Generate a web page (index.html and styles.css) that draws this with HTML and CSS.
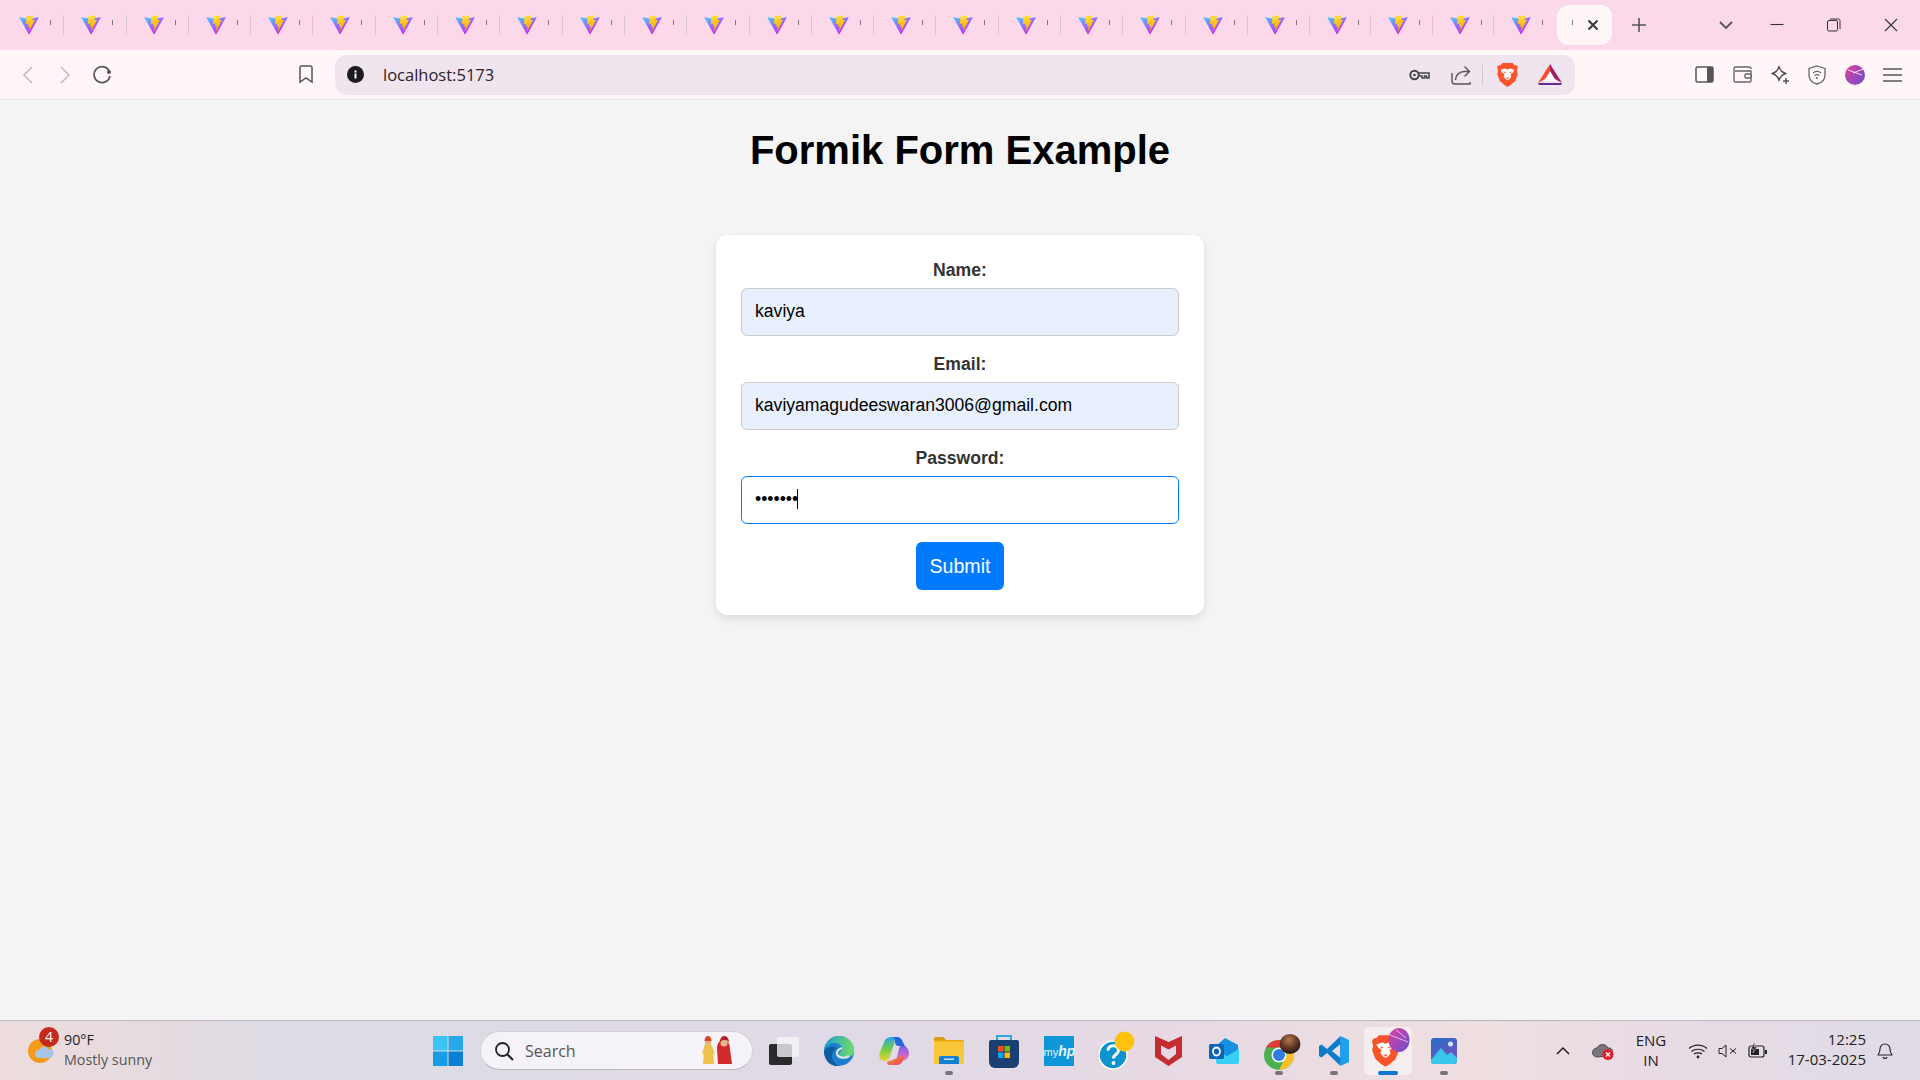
FILE: index.html
```html
<!DOCTYPE html>
<html lang="en">
<head>
    <meta charset="UTF-8">
    <title>Formik Form Example</title>
    <link rel="stylesheet" href="styles.css">
</head>
<body>
    <!-- shared icons -->
    <svg class="defs" width="0" height="0">
        <defs>
            <linearGradient id="viteA" x1="6" y1="33" x2="235" y2="344" gradientUnits="userSpaceOnUse">
                <stop offset="0" stop-color="#41d1ff"/>
                <stop offset="1" stop-color="#bd34fe"/>
            </linearGradient>
            <linearGradient id="viteB" x1="194" y1="8" x2="236" y2="292" gradientUnits="userSpaceOnUse">
                <stop offset="0" stop-color="#ffea83"/>
                <stop offset="0.08" stop-color="#ffdd35"/>
                <stop offset="1" stop-color="#ffa800"/>
            </linearGradient>
            <linearGradient id="ball" x1="0" y1="0" x2="1" y2="1">
                <stop offset="0" stop-color="#e0409a"/>
                <stop offset="1" stop-color="#6a4fd0"/>
            </linearGradient>
            <linearGradient id="edgeTop" x1="0" y1="0.5" x2="1" y2="0.5">
                <stop offset="0" stop-color="#1a9fcf"/>
                <stop offset="1" stop-color="#72dc68"/>
            </linearGradient>
            <linearGradient id="copilotLeft" x1="0.5" y1="0" x2="0.5" y2="1">
                <stop offset="0" stop-color="#2aa6e0"/>
                <stop offset="0.55" stop-color="#7ccf3e"/>
                <stop offset="1" stop-color="#f0d23c"/>
            </linearGradient>
            <linearGradient id="copilotRight" x1="0.5" y1="0" x2="0.5" y2="1">
                <stop offset="0" stop-color="#7f5ce8"/>
                <stop offset="1" stop-color="#ee6fc0"/>
            </linearGradient>
            <linearGradient id="copilotLow" x1="0" y1="0" x2="1" y2="1">
                <stop offset="0" stop-color="#f59a3c"/>
                <stop offset="1" stop-color="#e8405f"/>
            </linearGradient>
            <radialGradient id="nutBall" cx="0.45" cy="0.3" r="0.7">
                <stop offset="0" stop-color="#b87a4e"/>
                <stop offset="0.6" stop-color="#5a3422"/>
                <stop offset="1" stop-color="#2c1a12"/>
            </radialGradient>
            <symbol id="vite" viewBox="0 0 410 404">
                <path fill="url(#viteA)" d="M399.6 59.5L215.6 388.5C211.8 395.3 202.1 395.4 198.2 388.6L10.6 59.6C6.4 52.2 12.7 43.3 21 44.8L205.2 77.7C206.4 77.9 207.6 77.9 208.8 77.7L389.1 44.8C397.4 43.3 403.8 52.1 399.6 59.5Z"/>
                <path fill="url(#viteB)" d="M293 1.6L156.8 28.3C154.6 28.7 152.9 30.6 152.8 32.9L144.4 174.3C144.2 177.7 147.3 180.2 150.5 179.5L188.4 170.7C192 169.9 195.2 173.1 194.4 176.6L183.2 231.8C182.4 235.5 185.9 238.7 189.5 237.6L212.9 230.4C216.6 229.3 220.1 232.5 219.3 236.2L201.4 322.9C200.3 328.3 207.5 331.2 210.5 326.6L212.5 323.5L323.5 102.1C325.3 98.4 322.1 94.1 318 94.9L279 102.5C275.3 103.2 272.2 99.7 273.3 96.2L298.7 7.9C299.8 4.3 296.6 0.9 293 1.6Z"/>
            </symbol>
            <symbol id="brave" viewBox="0 0 24 28">
                <path fill="#fb542b" d="M6 0h12l2 2.5 3 .5 1 2-1 5 1 3-3 8-5 4.5-4 2.500-4-2.500L3 21l-3-8 1-3-1-5 1-2 3-.5z"/>
                <path fill="#fff" d="M4 8l5-1.500 3 1 3-1L20 8l-1.500 3-3 2 1 3-2.500 3-2 1-2-1-2.500-3 1-3-3-2z"/>
                <path fill="#fb542b" d="M7 10l3 .5-1 1.500zM17 10l-3 .5 1 1.500zM10 17h4l-2 2z"/>
            </symbol>
        </defs>
    </svg>

    <div class="tab-strip">
        <div class="tabs">
            <div class="tab"><svg class="tab-icon"><use href="#vite"/></svg><span class="tab-tick"></span></div>
            <div class="tab"><svg class="tab-icon"><use href="#vite"/></svg><span class="tab-tick"></span></div>
            <div class="tab"><svg class="tab-icon"><use href="#vite"/></svg><span class="tab-tick"></span></div>
            <div class="tab"><svg class="tab-icon"><use href="#vite"/></svg><span class="tab-tick"></span></div>
            <div class="tab"><svg class="tab-icon"><use href="#vite"/></svg><span class="tab-tick"></span></div>
            <div class="tab"><svg class="tab-icon"><use href="#vite"/></svg><span class="tab-tick"></span></div>
            <div class="tab"><svg class="tab-icon"><use href="#vite"/></svg><span class="tab-tick"></span></div>
            <div class="tab"><svg class="tab-icon"><use href="#vite"/></svg><span class="tab-tick"></span></div>
            <div class="tab"><svg class="tab-icon"><use href="#vite"/></svg><span class="tab-tick"></span></div>
            <div class="tab"><svg class="tab-icon"><use href="#vite"/></svg><span class="tab-tick"></span></div>
            <div class="tab"><svg class="tab-icon"><use href="#vite"/></svg><span class="tab-tick"></span></div>
            <div class="tab"><svg class="tab-icon"><use href="#vite"/></svg><span class="tab-tick"></span></div>
            <div class="tab"><svg class="tab-icon"><use href="#vite"/></svg><span class="tab-tick"></span></div>
            <div class="tab"><svg class="tab-icon"><use href="#vite"/></svg><span class="tab-tick"></span></div>
            <div class="tab"><svg class="tab-icon"><use href="#vite"/></svg><span class="tab-tick"></span></div>
            <div class="tab"><svg class="tab-icon"><use href="#vite"/></svg><span class="tab-tick"></span></div>
            <div class="tab"><svg class="tab-icon"><use href="#vite"/></svg><span class="tab-tick"></span></div>
            <div class="tab"><svg class="tab-icon"><use href="#vite"/></svg><span class="tab-tick"></span></div>
            <div class="tab"><svg class="tab-icon"><use href="#vite"/></svg><span class="tab-tick"></span></div>
            <div class="tab"><svg class="tab-icon"><use href="#vite"/></svg><span class="tab-tick"></span></div>
            <div class="tab"><svg class="tab-icon"><use href="#vite"/></svg><span class="tab-tick"></span></div>
            <div class="tab narrow"><svg class="tab-icon"><use href="#vite"/></svg><span class="tab-tick"></span></div>
            <div class="tab narrow"><svg class="tab-icon"><use href="#vite"/></svg><span class="tab-tick"></span></div>
            <div class="tab narrow"><svg class="tab-icon"><use href="#vite"/></svg><span class="tab-tick"></span></div>
            <div class="tab narrow last"><svg class="tab-icon"><use href="#vite"/></svg><span class="tab-tick"></span></div>
        </div>
        <div class="tab-active">
            <span class="tab-tick"></span>
            <svg width="12" height="12" viewBox="0 0 12 12"><path d="M1.5 1.5l9 9M10.5 1.5l-9 9" stroke="#3a3a3a" stroke-width="2" fill="none"/></svg>
        </div>
        <svg class="new-tab" width="16" height="16" viewBox="0 0 16 16"><path d="M8 1v14M1 8h14" stroke="#555" stroke-width="1.6" fill="none"/></svg>
        <svg class="tab-list" width="14" height="8" viewBox="0 0 14 8"><path d="M1 1l6 6 6-6" stroke="#555" stroke-width="1.8" fill="none"/></svg>
        <div class="win-controls">
            <svg class="win-btn" width="14" height="14" viewBox="0 0 14 14"><path d="M0.5 6.5h13" stroke="#333" stroke-width="1.1" fill="none"/></svg>
            <svg class="win-btn" width="14" height="14" viewBox="0 0 14 14"><rect x="0.5" y="2.5" width="10" height="10.5" rx="1.5" stroke="#333" fill="none"/><path d="M3 1h8.5a1.5 1.5 0 0 1 1.5 1.5V11" stroke="#333" fill="none"/></svg>
            <svg class="win-btn" width="14" height="14" viewBox="0 0 14 14"><path d="M1 1l12 12M13 1L1 13" stroke="#333" stroke-width="1.1" fill="none"/></svg>
        </div>
    </div>

    <div class="toolbar">
        <div class="tool-btn"><svg width="11" height="18" viewBox="0 0 11 18"><path d="M10 1L2 9l8 8" stroke="#c2bdbe" stroke-width="1.6" fill="none"/></svg></div>
        <div class="tool-btn"><svg width="11" height="18" viewBox="0 0 11 18"><path d="M1 1l8 8-8 8" stroke="#c2bdbe" stroke-width="1.6" fill="none"/></svg></div>
        <div class="tool-btn"><svg class="reload" width="20" height="20" viewBox="0 0 20 20"><path d="M17 5.5A8 8 0 1 0 18 11" stroke="#555" stroke-width="1.6" fill="none"/><circle cx="17" cy="7" r="2" fill="#555"/></svg></div>
        <div class="tool-btn bookmark"><svg width="14" height="19" viewBox="0 0 14 19"><path d="M1 2.5A1.5 1.5 0 0 1 2.5 1h9A1.5 1.5 0 0 1 13 2.5V17l-6-4-6 4z" stroke="#555" stroke-width="1.5" fill="none"/></svg></div>
        <div class="omnibox">
            <svg class="info-icon" width="17" height="17" viewBox="0 0 17 17"><circle cx="8.5" cy="8.5" r="8.5" fill="#1d1b1d"/><rect x="7.5" y="7.5" width="2" height="5" fill="#fff"/><rect x="7.5" y="4.5" width="2" height="2" fill="#fff"/></svg>
            <span class="url">localhost:5173</span>
            <svg class="omni-key" width="21" height="12" viewBox="0 0 21 12"><circle cx="5.5" cy="6" r="4.2" stroke="#444" stroke-width="2" fill="none"/><circle cx="5.5" cy="6" r="1.3" fill="#444"/><path d="M10 4h10v5h-2.5V7h-2v2H13V7h-3" fill="none" stroke="#444" stroke-width="1.5"/></svg>
            <svg class="omni-share" width="20" height="20" viewBox="0 0 20 20"><path d="M1 8v8a3 3 0 0 0 3 3h15v-2" stroke="#555" stroke-width="1.4" fill="none"/><path d="M4.5 15c0-5 4-8.5 9-8.5h5M13.5 1.5l5 5-5 5" stroke="#555" stroke-width="1.4" fill="none"/></svg>
            <span class="omni-divider"></span>
            <svg class="omni-brave"><use href="#brave"/></svg>
            <svg class="omni-bat" width="24" height="21" viewBox="0 0 24 21"><path fill="#ff4724" d="M12 0L0 19l12-7z"/><path fill="#9e1f63" d="M12 0l12 19-12-7z"/><path fill="#662d91" d="M0 19h24l-1 2H1z"/><path fill="#fff" d="M12 7l6 10H6z"/></svg>
        </div>
        <div class="tool-right">
            <div class="tool-btn"><svg width="19" height="17" viewBox="0 0 19 17"><rect x="1" y="1" width="17" height="15" rx="1.5" stroke="#555" stroke-width="1.5" fill="none"/><rect x="12" y="1" width="6" height="15" fill="#555"/></svg></div>
            <div class="tool-btn"><svg width="19" height="17" viewBox="0 0 19 17"><path d="M18 3V2.5A1.5 1.5 0 0 0 16.5 1h-14A1.5 1.5 0 0 0 1 2.5v12A1.5 1.5 0 0 0 2.5 16h14a1.5 1.5 0 0 0 1.5-1.5V5H2" stroke="#666" stroke-width="1.4" fill="none"/><rect x="12" y="8" width="6" height="4" rx="1" stroke="#666" stroke-width="1.4" fill="#fff7f7"/></svg></div>
            <div class="tool-btn"><svg width="20" height="20" viewBox="0 0 20 20"><path d="M9 1.5c1 4 3 6 7 7-4 1-6 3-7 7-1-4-3-6-7-7 4-1 6-3 7-7z" stroke="#555" stroke-width="1.4" fill="none" stroke-linejoin="round"/><path d="M16 13v6M13 16h6" stroke="#555" stroke-width="1.5"/></svg></div>
            <div class="tool-btn"><svg width="18" height="20" viewBox="0 0 18 20"><path d="M9 1l8 2.5V10c0 5-4 8-8 9-4-1-8-4-8-9V3.5z" stroke="#666" stroke-width="1.3" fill="none"/><path d="M5 8c2.5-2 5.5-2 8 0M6.500 10.500c1.500-1 3.500-1 5 0" stroke="#666" stroke-width="1.2" fill="none"/><circle cx="9" cy="13" r="1" fill="#666"/></svg></div>
            <div class="tool-btn"><svg width="20" height="20" viewBox="0 0 20 20"><circle cx="10" cy="10" r="10" fill="url(#ball)"/><path d="M3 5l14 5M8 8l10-4" stroke="#fff" stroke-width="0.8" fill="none"/></svg></div>
            <div class="tool-btn"><svg width="19" height="14" viewBox="0 0 19 14"><path d="M0 1h19M0 7h19M0 13h19" stroke="#555" stroke-width="1.4"/></svg></div>
        </div>
    </div>

    <main class="page">
        <h1 class="page-title">Formik Form Example</h1>
        <form class="form-card">
            <label class="field-label">Name:</label>
            <input class="field-input autofilled" type="text" value="kaviya">
            <label class="field-label">Email:</label>
            <input class="field-input autofilled" type="text" value="kaviyamagudeeswaran3006@gmail.com">
            <label class="field-label">Password:</label>
            <div class="field-wrap">
                <input class="field-input focused" type="password" value="kaviya1">
                <span class="caret"></span>
            </div>
            <button class="submit-btn" type="button">Submit</button>
        </form>
    </main>

    <footer class="taskbar">
        <div class="weather">
            <div class="weather-icon">
                <svg width="28" height="28" viewBox="0 0 28 28"><circle cx="12" cy="14" r="12" fill="#f59a1b"/><path d="M11 21a4 4 0 0 1 0-8 5 5 0 0 1 9-1 4.5 4.5 0 0 1 2 9z" fill="#a9c6ea"/></svg>
                <span class="weather-badge">4</span>
            </div>
            <div class="weather-text">
                <span class="weather-temp">90°F</span>
                <span class="weather-desc">Mostly sunny</span>
            </div>
        </div>

        <div class="task-center">
            <div class="task-item win-logo">
                <svg width="30" height="30" viewBox="0 0 30 30"><rect width="14.5" height="14.5" fill="#3cc4f5"/><rect x="15.5" width="14.5" height="14.5" fill="#27a8ea"/><rect y="15.5" width="14.5" height="14.5" fill="#1a9be6"/><rect x="15.5" y="15.5" width="14.5" height="14.5" fill="#0a7fd6"/></svg>
            </div>
            <div class="search-box">
                <svg width="20" height="20" viewBox="0 0 20 20"><circle cx="8.5" cy="8.5" r="6.5" stroke="#222" stroke-width="1.8" fill="none"/><path d="M13 13l6 6" stroke="#222" stroke-width="2"/></svg>
                <span class="search-text">Search</span>
                <svg class="search-art" width="32" height="29" viewBox="0 0 32 29"><path d="M4 8h6l4 10-1 1-1-3 1 12H2l1-12-1 3-1-1z" fill="#eec04c"/><circle cx="7" cy="5.5" r="3.2" fill="#e6b083"/><path d="M3.5 5c0-3 1.5-5 3.5-5s3.5 2 3.5 5z" fill="#d9442b"/><path d="M22 4c5 0 7 4 7 9l2 15H17l-1-15c0-5 2-9 6-9z" fill="#d22a2a"/><circle cx="23" cy="7" r="3.5" fill="#e8b48a"/><path d="M19 6c0-4 2-6 4.5-6S28 3 28 6c-2-2-6-3-9 0z" fill="#b81e24"/></svg>
            </div>
            <div class="task-item task-view">
                <svg width="30" height="28" viewBox="0 0 30 28"><rect y="7" width="23" height="21" rx="2" fill="#2b2a2c"/><rect x="8" width="22" height="20" rx="2" fill="#f6f5f7" fill-opacity="0.78"/></svg>
            </div>
            <div class="task-item">
                <svg width="30" height="30" viewBox="0 0 30 30"><circle cx="15" cy="15" r="15" fill="#1a7fce"/><path d="M8 29C2 26 0 20 0 15c4-5 10-5 13-3-3 1-5 4-5 8 0 4 3 8 7 10-3 0-5 0-7-1z" fill="#0f5d9f"/><path d="M0 15C1 6 8 0 15 0c8 0 15 6 15 14 0 5-4 8-9 8-4 0-6-2-6-4 0-2 3-3 3-6 0-3-4-5-8-5C6 7 2 10 0 15z" fill="url(#edgeTop)"/><path d="M25 20c-4 3-11 2-12-2-.5-3 2-5 5-6" stroke="#e4e2ec" stroke-width="2.2" fill="none"/></svg>
            </div>
            <div class="task-item">
                <svg width="30" height="28" viewBox="0 0 30 28"><path d="M25 8c3 2 5 5 5 8 0 5-3 8-8 8h-5l3-12c.5-3 3-5 5-4z" fill="url(#copilotRight)"/><path d="M9 24l-1 2c0 1 1 2 2 2h8c3 0 5-2 6-5l2-5-8 3c-3 1-6 3-9 3z" fill="url(#copilotLow)"/><path d="M13 0c-4 0-7 2-8 5L1 15c-2 4 0 9 4 9s5-2 6-5l4-12c1-3 1-6-2-7z" fill="url(#copilotLeft)"/><path d="M13 0h5c3 0 5 2 6 5l2 5-6-1c-3 0-4-2-4-4 0-2-1-4-3-5z" fill="#2166de"/></svg>
            </div>
            <div class="task-item running">
                <svg width="30" height="27" viewBox="0 0 30 27"><path d="M0 2a2 2 0 0 1 2-2h7l3 3H0z" fill="#dd9b0e"/><rect y="3" width="30" height="24" rx="1" fill="#f9c83a"/><rect y="3" width="30" height="1.5" fill="#e8a80f"/><path d="M5 21a2 2 0 0 1 2-2h16a2 2 0 0 1 2 2v6H5z" fill="#0f80d4"/><rect x="10" y="21.5" width="10" height="1.5" fill="#bfe4ff"/></svg>
            </div>
            <div class="task-item">
                <svg width="30" height="34" viewBox="0 0 30 34"><path d="M8 6V2h14v4" stroke="#2fa8e0" stroke-width="2" fill="none"/><path d="M0 8a2 2 0 0 1 2-2h26a2 2 0 0 1 2 2v20a6 6 0 0 1-6 6H6a6 6 0 0 1-6-6z" fill="#1a3f73"/><rect x="9" y="12" width="5.5" height="5.5" fill="#f25022"/><rect x="15.5" y="12" width="5.5" height="5.5" fill="#7fba00"/><rect x="9" y="18.5" width="5.5" height="5.5" fill="#00a4ef"/><rect x="15.5" y="18.5" width="5.5" height="5.5" fill="#ffb900"/></svg>
            </div>
            <div class="task-item">
                <div class="myhp"><span class="myhp-my">my</span><span class="myhp-hp">hp</span></div>
            </div>
            <div class="task-item help">
                <svg width="36" height="40" viewBox="0 0 36 40"><circle cx="14" cy="24" r="14" fill="#0f93cf" stroke="#fff" stroke-width="1.5"/><path d="M9 19.5c0-6.5 10.500-6.500 10.500 0 0 4-5 3.500-5 8" stroke="#fff" stroke-width="3" fill="none"/><circle cx="14.5" cy="32" r="1.9" fill="#fff"/><circle cx="25.5" cy="10.5" r="10" fill="#fdc20c"/></svg>
            </div>
            <div class="task-item">
                <svg width="27" height="30" viewBox="0 0 27 30"><path fill-rule="evenodd" d="M0 0l13.5 6L27 0v21l-13.5 9L0 21zM6 9.5v8.5l7.5 6 7.5-6V9.5l-7.5 4z" fill="#c32c30"/></svg>
            </div>
            <div class="task-item">
                <svg width="30" height="26" viewBox="0 0 30 26"><path d="M16 0l13 7v11H7V8z" fill="#1490df"/><path d="M7 12l11 6 12-7v13a2 2 0 0 1-2 2H9a2 2 0 0 1-2-2z" fill="#38d0f4"/><rect y="6" width="15" height="15" rx="1.5" fill="#0f64b8"/><ellipse cx="7.5" cy="13.5" rx="3.5" ry="4" stroke="#fff" stroke-width="1.8" fill="none"/></svg>
            </div>
            <div class="task-item running chrome">
                <svg width="40" height="40" viewBox="0 0 40 40"><circle cx="16" cy="24" r="15" fill="#4caf50"/><path d="M3 16.5a15 15 0 0 1 26 0H16z" fill="#e53935"/><path d="M29 16.5A15 15 0 0 1 16 39l7-14z" fill="#fbc02d"/><circle cx="16" cy="24" r="7.5" fill="#fff"/><circle cx="16" cy="24" r="6" fill="#2f7de1"/><ellipse cx="27" cy="13" rx="10.5" ry="10" fill="url(#nutBall)"/></svg>
            </div>
            <div class="task-item running">
                <svg width="30" height="30" viewBox="0 0 30 30"><path d="M21.5 0L30 4v22l-8.5 4L21 23V7z" fill="#1fa0ec"/><path d="M21.5 0L8 13 2.5 8.5 0 10v10l2.5 1.500L8 17l13.500 13V22L13 15l8.500-7z" fill="#0f7ccb"/></svg>
            </div>
            <div class="task-item active">
                <svg class="brave-main"><use href="#brave"/></svg>
                <svg class="brave-ball" width="22" height="24" viewBox="0 0 22 24"><ellipse cx="11" cy="12" rx="10.5" ry="12" fill="url(#ball)"/><path d="M2 7l18 7M8 2l10 8" stroke="#e8d8ee" stroke-width="0.8" fill="none"/></svg>
            </div>
            <div class="task-item running">
                <svg width="26" height="26" viewBox="0 0 26 26"><defs><linearGradient id="photoBg" x1="0" y1="0" x2="0.6" y2="1"><stop offset="0" stop-color="#1f6fc4"/><stop offset="1" stop-color="#7a52c2"/></linearGradient></defs><rect width="26" height="26" rx="3" fill="url(#photoBg)"/><circle cx="19.5" cy="6" r="2.5" fill="#cfe9ff"/><path d="M0 22l10-12 6 7 4-3 6 6v3a3 3 0 0 1-3 3H3a3 3 0 0 1-3-3z" fill="#38c6ec"/></svg>
            </div>
        </div>

        <div class="tray">
            <svg class="tray-chevron" width="14" height="8" viewBox="0 0 14 8"><path d="M1 7l6-6 6 6" stroke="#222" stroke-width="1.5" fill="none"/></svg>
            <svg class="tray-cloud" width="22" height="18" viewBox="0 0 22 18"><path d="M5 15a4.5 4.5 0 0 1 0-9 6 6 0 0 1 11 0 4 4 0 0 1 1 8z" fill="#78767c" stroke="#333" stroke-width="0.8"/><circle cx="16" cy="12.5" r="5.5" fill="#e0202e"/><path d="M14 10.5l4 4M18 10.5l-4 4" stroke="#fff" stroke-width="1.3"/></svg>
            <div class="tray-lang">ENG<br>IN</div>
            <svg class="tray-wifi" width="20" height="16" viewBox="0 0 20 16"><path d="M1 5.5c5-4.5 13-4.5 18 0M3.5 8.5c3.5-3 9.5-3 13 0M6 11c2-1.5 6-1.5 8 0" stroke="#222" stroke-width="1.2" fill="none"/><circle cx="10" cy="14" r="1.4" fill="#222"/></svg>
            <svg class="tray-sound" width="19" height="14" viewBox="0 0 19 14"><path d="M1 4.5h3L8 1v12L4 9.5H1z" stroke="#222" fill="none"/><path d="M12 4.5l6 5M18 4.5l-6 5" stroke="#222"/></svg>
            <svg class="tray-battery" width="20" height="16" viewBox="0 0 20 16"><rect x="1" y="3" width="15" height="11" rx="2" stroke="#222" stroke-width="1.2" fill="none"/><rect x="3" y="6" width="8" height="6" fill="#222"/><rect x="17" y="7" width="2" height="4" fill="#222"/><path d="M6 0L3 6h3l-1 4 4-6H6l1-4z" fill="#222" stroke="#e6dae4" stroke-width="0.5"/></svg>
            <div class="tray-clock">12:25<br>17-03-2025</div>
            <svg class="tray-bell" width="16" height="19" viewBox="0 0 16 19"><path d="M1 14c1.5-2 2-3 2-6a5 5 0 0 1 10 0c0 3 .5 4 2 6z" stroke="#222" stroke-width="1.1" fill="none" stroke-linejoin="round"/><path d="M6 16c.5 2 3.5 2 4 0" stroke="#222" stroke-width="1.1" fill="none"/></svg>
        </div>
    </footer>
</body>
</html>
```

FILE: styles.css
```css
html, body {
    margin: 0;
    padding: 0;
    height: 100%;
}
body {
    display: flex;
    flex-direction: column;
    height: 100vh;
    overflow: hidden;
    font-family: "Open Sans", "Noto Sans", sans-serif;
    background-color: #f4f4f4;
}
.defs {
    position: absolute;
}
svg {
    display: block;
    flex-shrink: 0;
}

/* tab strip */
.tab-strip {
    display: flex;
    align-items: center;
    flex-shrink: 0;
    height: 50px;
    padding-left: 2px;
    background-color: #fbd9ea;
}
.tabs {
    display: flex;
    flex-shrink: 0;
}
.tab {
    display: flex;
    align-items: center;
    flex-shrink: 0;
    box-sizing: border-box;
    width: 62.3px;
    height: 20px;
    padding-left: 17px;
    border-right: 1px solid #d9c6d2;
}
.tab.narrow {
    width: 61.2px;
}
.tab.last {
    border-right: none;
}
.tab-icon {
    width: 20px;
    height: 20px;
}
.tab-tick {
    width: 1px;
    height: 5px;
    margin: 0 0 6px 11px;
    background-color: #807a80;
}
.tab-active {
    display: flex;
    align-items: center;
    flex-shrink: 0;
    box-sizing: border-box;
    width: 55px;
    height: 40px;
    margin-left: 2px;
    padding-left: 4px;
    border-radius: 12px;
    background-color: #fff7f7;
}
.tab-active svg {
    margin-left: 14px;
}
.new-tab {
    margin-left: 19px;
}
.tab-list {
    margin-left: 72px;
}
.win-controls {
    display: flex;
    margin-left: 37px;
}
.win-btn {
    margin-right: 43px;
}
.win-btn:last-child {
    margin-right: 0;
}

/* toolbar */
.toolbar {
    display: flex;
    align-items: center;
    flex-shrink: 0;
    box-sizing: border-box;
    height: 50px;
    padding-left: 9px;
    border-bottom: 1px solid #f0e0e2;
    background-color: #fff7f7;
}
.tool-btn {
    display: flex;
    align-items: center;
    justify-content: center;
    width: 37.5px;
    height: 40px;
}
.reload {
    margin-right: 2px;
}
.bookmark {
    margin-left: 166px;
}
.omnibox {
    display: flex;
    align-items: center;
    box-sizing: border-box;
    width: 1240px;
    height: 40px;
    margin-left: 10px;
    padding-left: 12px;
    border-radius: 12px;
    background-color: #f0e4ee;
}
.url {
    margin-left: 19px;
    font-size: 16.5px;
    color: #2a2228;
}
.omni-key {
    margin-left: auto;
}
.omni-share {
    margin-left: 21px;
}
.omni-divider {
    width: 1px;
    height: 20px;
    margin-left: 11px;
    background-color: #cfc5cd;
}
.omni-brave {
    width: 21px;
    height: 24px;
    margin-left: 14px;
}
.omni-bat {
    margin: 0 13px 0 20px;
}
.tool-right {
    display: flex;
    margin-left: auto;
    padding-right: 9px;
}

/* page content */
.page {
    flex: 1;
    display: flex;
    flex-direction: column;
    align-items: center;
    font-family: "Liberation Sans", Arial, sans-serif;
}
.page-title {
    margin: 28px 0 62px;
    font-size: 40px;
    font-weight: bold;
    color: #000;
}
.form-card {
    display: flex;
    flex-direction: column;
    align-items: center;
    box-sizing: border-box;
    width: 488px;
    padding: 25px;
    border-radius: 12px;
    background-color: #fff;
    box-shadow: 0 4px 10px rgba(0,0,0,0.1);
}
.field-label {
    margin-bottom: 7px;
    font-size: 17.6px;
    line-height: 21px;
    font-weight: bold;
    color: #333;
}
.field-input {
    box-sizing: border-box;
    width: 438px;
    height: 48px;
    margin-bottom: 18px;
    padding: 0 13px 2px;
    border: 1px solid #ccc;
    border-radius: 6px;
    outline: none;
    font-family: "Liberation Sans", Arial, sans-serif;
    font-size: 17.6px;
    color: #000;
}
.field-input.autofilled {
    background-color: #e8f0fe;
}
.field-input.focused {
    border-color: #007bff;
}
.field-wrap {
    position: relative;
}
.caret {
    position: absolute;
    left: 56px;
    top: 13px;
    width: 1px;
    height: 20px;
    background-color: #000;
}
.submit-btn {
    width: 88px;
    height: 48px;
    border: none;
    border-radius: 6px;
    background-color: #007bff;
    font-family: "Liberation Sans", Arial, sans-serif;
    font-size: 19.6px;
    color: #fff;
}

/* taskbar */
.taskbar {
    display: flex;
    align-items: center;
    flex-shrink: 0;
    box-sizing: border-box;
    height: 60px;
    border-top: 1px solid #bdb8c0;
    background: linear-gradient(90deg, #eddcdc 0, #dedbe4 280px, #dfdae6 800px, #e6d9e4 1150px, #efdfe1 1480px, #e8dbe4 1650px, #dfdbe6 1920px);
}
.weather {
    display: flex;
    align-items: center;
    width: 178px;
    margin-left: 28px;
}
.weather-icon {
    position: relative;
    width: 28px;
    height: 28px;
}
.weather-badge {
    position: absolute;
    left: 11px;
    top: -10px;
    width: 20px;
    height: 20px;
    border-radius: 50%;
    background-color: #c42b1c;
    font-size: 14px;
    line-height: 20px;
    text-align: center;
    color: #fff;
}
.weather-text {
    display: flex;
    flex-direction: column;
    margin: -1px 0 0 8px;
    font-size: 14.3px;
    line-height: 20px;
}
.weather-temp {
    color: #222;
}
.weather-desc {
    color: #555;
}
.task-center {
    display: flex;
    align-items: center;
    margin-left: 214px;
}
.task-item {
    position: relative;
    display: flex;
    align-items: center;
    justify-content: center;
    width: 55px;
    height: 48px;
}
.win-logo {
    margin-right: 5px;
}
.task-view {
    margin-left: 3px;
}
.running::after {
    content: "";
    position: absolute;
    left: 24px;
    bottom: 0;
    width: 8px;
    height: 4px;
    border-radius: 2px;
    background-color: #77757b;
}
.help svg {
    margin-left: 7px;
}
.chrome svg {
    margin-left: 8px;
}
.task-item.active {
    box-sizing: border-box;
    width: 48px;
    margin: 0 4px 0 3px;
    border-radius: 5px;
    background-color: #f4eef1;
}
.task-item.active::after {
    content: "";
    position: absolute;
    left: 14px;
    bottom: 0;
    width: 20px;
    height: 4px;
    border-radius: 2px;
    background-color: #0a78d4;
}
.brave-main {
    width: 27px;
    height: 34px;
    margin-right: 5px;
}
.brave-ball {
    position: absolute;
    left: 24px;
    top: 1px;
}
.search-box {
    display: flex;
    align-items: center;
    box-sizing: border-box;
    width: 273px;
    height: 39px;
    padding-left: 13px;
    border: 1px solid #d5d1d9;
    border-bottom-color: #bdb9c1;
    border-radius: 20px;
    background-color: #f5f3f7;
}
.search-text {
    margin-left: 11px;
    font-size: 16px;
    color: #555;
}
.search-art {
    margin-left: auto;
    margin-right: 19px;
}
.myhp {
    width: 30px;
    height: 30px;
    background-color: #0e97d8;
    font-family: "Liberation Sans", Arial, sans-serif;
    line-height: 30px;
    text-align: center;
    color: #e8f6fd;
}
.myhp-my {
    font-size: 11px;
}
.myhp-hp {
    font-size: 14px;
    font-style: italic;
    font-weight: bold;
}
.tray {
    display: flex;
    align-items: center;
    flex: 1;
    margin-left: 85px;
}
.tray-cloud {
    margin-left: 22px;
}
.tray-lang {
    width: 40px;
    margin: -2px 0 0 17px;
    font-size: 15px;
    line-height: 20px;
    text-align: center;
    color: #222;
}
.tray-wifi {
    margin-left: 17px;
}
.tray-sound {
    margin-left: 10px;
}
.tray-battery {
    margin-left: 11px;
}
.tray-clock {
    width: 90px;
    margin: -3px 0 0 8px;
    font-size: 15px;
    line-height: 20px;
    text-align: right;
    color: #222;
}
.tray-bell {
    margin-left: 11px;
}
```
